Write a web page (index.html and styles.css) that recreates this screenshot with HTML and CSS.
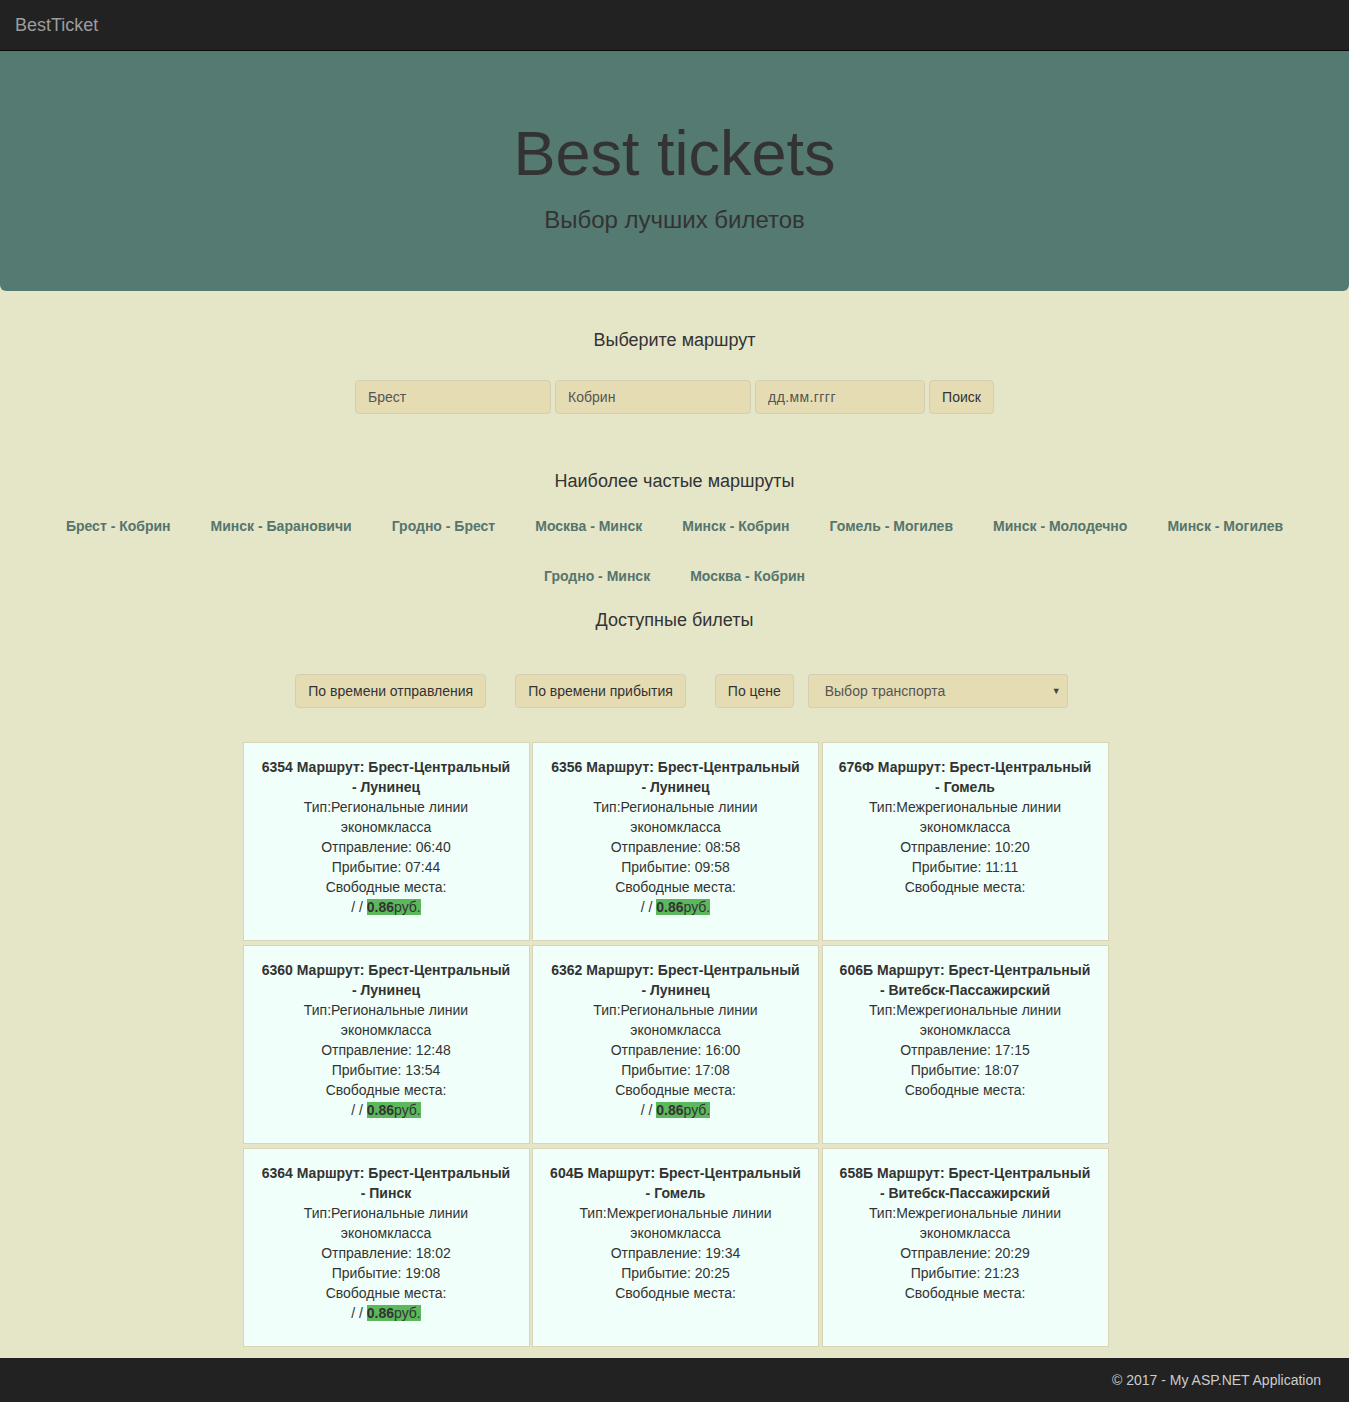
FILE: index.html
```html
<!DOCTYPE html>
<html lang="ru">
<head>
<meta charset="utf-8">
<title>BestTicket</title>
<link rel="stylesheet" href="styles.css">
</head>
<body>
<header class="navbar"><span class="brand">BestTicket</span></header>
<section class="jumbotron">
  <h1>Best tickets</h1>
  <p>Выбор лучших билетов</p>
</section>
<main class="main">
  <h4 class="title t1">Выберите маршрут</h4>
  <form class="search">
    <input class="field w-city" type="text" placeholder="Брест">
    <input class="field w-city" type="text" placeholder="Кобрин">
    <input class="field w-date" type="text" placeholder="дд.мм.гггг">
    <button class="btn" type="button">Поиск</button>
  </form>
  <h4 class="title t2">Наиболее частые маршруты</h4>
  <nav class="routes">
    <a href="#">Брест - Кобрин</a>
    <a href="#">Минск - Барановичи</a>
    <a href="#">Гродно - Брест</a>
    <a href="#">Москва - Минск</a>
    <a href="#">Минск - Кобрин</a>
    <a href="#">Гомель - Могилев</a>
    <a href="#">Минск - Молодечно</a>
    <a href="#">Минск - Могилев</a>
    <a href="#">Гродно - Минск</a>
    <a href="#">Москва - Кобрин</a>
  </nav>
  <h4 class="title t3">Доступные билеты</h4>
  <div class="sorts">
    <button class="btn sort wide" type="button">По времени отправления</button>
    <button class="btn sort wide" type="button">По времени прибытия</button>
    <button class="btn sort" type="button">По цене</button>
    <div class="select"><span>Выбор транспорта</span><span class="arrow">▼</span></div>
  </div>
  <div class="cards">
    <div class="card"><b>6354 Маршрут: Брест-Центральный - Лунинец</b><div>Тип:Региональные линии экономкласса</div><div>Отправление: 06:40</div><div>Прибытие: 07:44</div><div>Свободные места:</div><div>/ / <span class="price"><b>0.86</b>руб.</span></div></div>
    <div class="card"><b>6356 Маршрут: Брест-Центральный - Лунинец</b><div>Тип:Региональные линии экономкласса</div><div>Отправление: 08:58</div><div>Прибытие: 09:58</div><div>Свободные места:</div><div>/ / <span class="price"><b>0.86</b>руб.</span></div></div>
    <div class="card"><b>676Ф Маршрут: Брест-Центральный - Гомель</b><div>Тип:Межрегиональные линии экономкласса</div><div>Отправление: 10:20</div><div>Прибытие: 11:11</div><div>Свободные места:</div></div>
    <div class="card"><b>6360 Маршрут: Брест-Центральный - Лунинец</b><div>Тип:Региональные линии экономкласса</div><div>Отправление: 12:48</div><div>Прибытие: 13:54</div><div>Свободные места:</div><div>/ / <span class="price"><b>0.86</b>руб.</span></div></div>
    <div class="card"><b>6362 Маршрут: Брест-Центральный - Лунинец</b><div>Тип:Региональные линии экономкласса</div><div>Отправление: 16:00</div><div>Прибытие: 17:08</div><div>Свободные места:</div><div>/ / <span class="price"><b>0.86</b>руб.</span></div></div>
    <div class="card"><b>606Б Маршрут: Брест-Центральный - Витебск-Пассажирский</b><div>Тип:Межрегиональные линии экономкласса</div><div>Отправление: 17:15</div><div>Прибытие: 18:07</div><div>Свободные места:</div></div>
    <div class="card"><b>6364 Маршрут: Брест-Центральный - Пинск</b><div>Тип:Региональные линии экономкласса</div><div>Отправление: 18:02</div><div>Прибытие: 19:08</div><div>Свободные места:</div><div>/ / <span class="price"><b>0.86</b>руб.</span></div></div>
    <div class="card"><b>604Б Маршрут: Брест-Центральный - Гомель</b><div>Тип:Межрегиональные линии экономкласса</div><div>Отправление: 19:34</div><div>Прибытие: 20:25</div><div>Свободные места:</div></div>
    <div class="card"><b>658Б Маршрут: Брест-Центральный - Витебск-Пассажирский</b><div>Тип:Межрегиональные линии экономкласса</div><div>Отправление: 20:29</div><div>Прибытие: 21:23</div><div>Свободные места:</div></div>
  </div>
</main>
<footer class="footer"><span>© 2017 - My ASP.NET Application</span></footer>
</body>
</html>
```

FILE: styles.css
```css
* { box-sizing: border-box; }
html, body { margin: 0; padding: 0; }
body {
  background: #e5e5c8;
  color: #333;
  font-family: "Liberation Sans", Arial, sans-serif;
  font-size: 14px;
  line-height: 20px;
}
.navbar {
  height: 51px;
  background: #222;
  border-bottom: 1px solid #080808;
  display: flex;
  align-items: center;
  padding: 0 15px;
}
.brand {
  color: #9d9d9d;
  font-size: 18px;
  line-height: 20px;
}
.jumbotron {
  background: #557a72;
  border-radius: 0 0 6px 6px;
  padding: 48px 0;
  text-align: center;
  height: 240px;
}
.jumbotron h1 {
  margin: 20px 0 0;
  font-size: 63px;
  line-height: 69px;
  font-weight: 400;
  color: #333;
}
.jumbotron p {
  margin: 17px 0 0;
  font-size: 24px;
  line-height: 30px;
  color: #333;
}
.main {
  padding-top: 39px;
  padding-bottom: 11px;
}
.title {
  margin: 0;
  font-size: 18px;
  line-height: 20px;
  font-weight: 400;
  text-align: center;
}
.t2 { margin-top: 57px; }
.t3 { margin-top: 24px; }
.search {
  margin: 30px 0 0;
  display: flex;
  justify-content: center;
  gap: 4px;
}
.field {
  height: 34px;
  padding: 6px 12px;
  background: #e5dcb3;
  border: 1px solid #d3cfb3;
  border-radius: 4px;
  font-family: inherit;
  font-size: 14px;
  color: #555;
}
.field::placeholder { color: #555; }
.w-city { width: 196px; }
.w-date { width: 170px; letter-spacing: 0.4px; }
.btn {
  height: 34px;
  padding: 6px 12px;
  background: #e5dcb3;
  border: 1px solid #d3cfb3;
  border-radius: 4px;
  font-family: inherit;
  font-size: 14px;
  color: #333;
  line-height: 20px;
}
.routes {
  margin-top: 25px;
  display: flex;
  flex-wrap: wrap;
  justify-content: center;
  column-gap: 40px;
  row-gap: 30px;
  padding: 0 60px;
}
.routes a {
  font-weight: 700;
  color: #55756d;
  text-decoration: none;
  line-height: 20px;
}
.sorts {
  margin-top: 44px;
  display: flex;
  justify-content: center;
  gap: 14px;
  padding-left: 14px;
}
.sort.wide { margin-right: 15px; }
.select {
  width: 260px;
  height: 34px;
  background: #e5dcb3;
  border: 1px solid #d3cfb3;
  border-radius: 3px;
  display: flex;
  align-items: center;
  justify-content: space-between;
  padding: 0 6px 0 16px;
  color: #555;
}
.select .arrow { font-size: 9px; color: #444; }
.cards {
  margin: 34px 0 0 calc(50% - 432px);
  width: 866px;
  display: grid;
  grid-template-columns: repeat(3, 287px);
  grid-auto-rows: 199px;
  column-gap: 2.5px;
  row-gap: 4px;
}
.card {
  background: #f0fff9;
  border: 1px solid #d8d4b6;
  padding: 14px 15px;
  text-align: center;
  line-height: 20px;
}
.card > b { display: block; }
.price { background: #5cb85c; color: #333; }
.footer {
  background: #222;
  height: 44px;
  display: flex;
  align-items: center;
  justify-content: flex-end;
  padding-right: 28px;
  color: #ccc;
}
```
